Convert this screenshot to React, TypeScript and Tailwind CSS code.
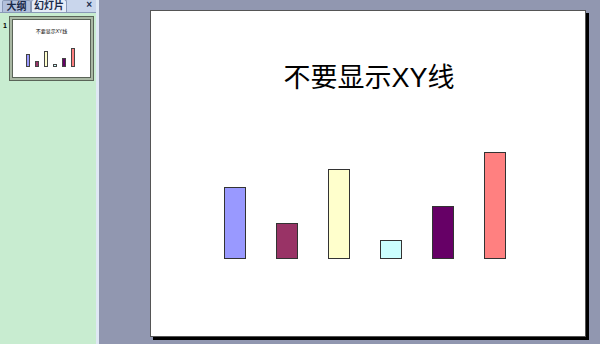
import React from "react";

const bars = [
  { h: 72, c: "bg-[#9999ff]" },
  { h: 36, c: "bg-[#993366]" },
  { h: 90, c: "bg-[#ffffcc]" },
  { h: 19, c: "bg-[#ccffff]" },
  { h: 53, c: "bg-[#660066]" },
  { h: 107, c: "bg-[#ff8080]" },
];

const thumbBars = [
  { h: 13, c: "bg-[#9999ff]" },
  { h: 6, c: "bg-[#993366]" },
  { h: 16, c: "bg-[#ffffcc]" },
  { h: 3, c: "bg-[#ccffff]" },
  { h: 9, c: "bg-[#660066]" },
  { h: 19, c: "bg-[#ff8080]" },
];

const font = { fontFamily: '"Liberation Sans", "Noto Sans CJK SC", sans-serif' };

export default function App() {
  return (
    <div className="flex h-[344px] w-[600px] overflow-hidden" style={font}>
      {/* left panel */}
      <div className="flex w-[96px] flex-col bg-[#c8ecd0]">
        <div className="flex h-[13px] items-end border-b border-[#8a9ab8] bg-[#c9d6ec]">
          <div className="ml-[2px] flex h-[12px] w-[29px] items-center justify-center rounded-t-[2px] border border-b-0 border-[#8a9ab8] bg-[#b2c0dc] text-[10px] leading-none font-bold text-[#1a2a4a]">
            大纲
          </div>
          <div className="flex h-[13px] w-[36px] items-center justify-center rounded-t-[3px] border border-b-0 border-[#8a9ab8] bg-[#e6edf8] text-[10px] leading-none font-bold text-[#1a2a4a]">
            幻灯片
          </div>
          <div className="flex-1" />
          <div className="mr-[4px] mb-[2px] text-[10px] leading-none font-bold text-[#203050]">×</div>
        </div>
        <div className="flex pt-[3px]">
          <div className="w-[9px] pt-[6px] pl-[3px] text-[7px] leading-none font-bold text-black">1</div>
          <div className="h-[65px] w-[85px] border border-[#5a6458] bg-[#a9b8a4] p-[2px]">
            <div className="flex h-full w-full flex-col items-center border border-[#5a6458] bg-white">
              <div className="mt-[9px] text-[5px] leading-none text-black">不要显示XY线</div>
              <div className="mt-[14px] ml-[-2px] flex items-end gap-[5px]">
                {thumbBars.map((b, i) => (
                  <div
                    key={i}
                    className={`w-[4px] border border-[#444] ${b.c}`}
                    style={{ height: b.h }}
                  />
                ))}
              </div>
            </div>
          </div>
        </div>
      </div>
      {/* divider */}
      <div className="w-[3px] bg-[#dfe8f4]" />
      {/* main area */}
      <div className="flex-1 bg-[#9197b0] pt-[10px] pl-[51px]">
        <div className="relative h-[327px] w-[436px] border border-[#555] bg-white shadow-[3px_3px_0_#000]">
          <div className="flex flex-col items-center">
            <div className="mt-[51px] ml-[2px] h-[32px] text-[27px] leading-[32px] text-black">不要显示XY线</div>
          </div>
          <div className="mt-[58px] ml-[73px] flex items-end gap-[30px]">
            {bars.map((b, i) => (
              <div
                key={i}
                className={`w-[22px] border border-[#333] ${b.c}`}
                style={{ height: b.h }}
              />
            ))}
          </div>
        </div>
      </div>
    </div>
  );
}
